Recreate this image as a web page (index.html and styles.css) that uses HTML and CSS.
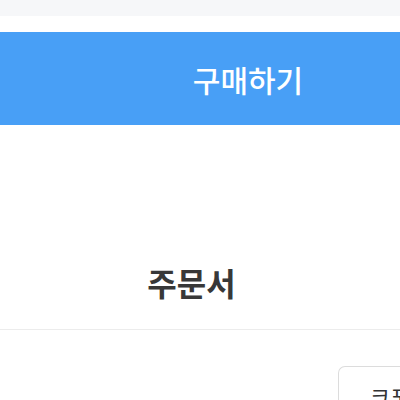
FILE: index.html
```html
<!DOCTYPE html>
<html lang="ko">
<head>
  <meta charset="UTF-8" />
  <meta name="viewport" content="width=device-width, initial-scale=1.0"/>
  <title>주문서</title>
  <link rel="stylesheet" href="styles.css">
</head>
<body>
  <div class="top-strip"></div>
  <div class="buy-wrap">
    <button class="buy-btn">구매하기</button>
  </div>
  <section class="order-head">
    <h1>주문서</h1>
  </section>
  <div class="order-body">
    <button class="coupon-btn">쿠폰</button>
  </div>
</body>
</html>
```

FILE: styles.css
```css
* { box-sizing: border-box; margin: 0; padding: 0; }
body {
  background: #fff;
  font-family: "Noto Sans CJK KR", "Noto Sans", sans-serif;
  width: 400px;
  height: 400px;
  overflow: hidden;
}
.top-strip {
  height: 16px;
  background: #f6f7f9;
}
.buy-wrap {
  padding-top: 16px;
}
.buy-btn {
  display: flex;
  align-items: center;
  justify-content: center;
  width: 100%;
  height: 93px;
  padding-left: 96px;
  border: none;
  background: #489ff6;
  color: #fff;
  font-family: inherit;
  font-size: 30px;
  font-weight: 500;
}
.order-head {
  display: flex;
  justify-content: center;
  padding: 134px 17px 0 0;
  height: 205px;
  border-bottom: 1px solid #ececec;
}
.order-head h1 {
  font-size: 32px;
  font-weight: 700;
  color: #383838;
  line-height: 46px;
}
.order-body {
  display: flex;
  justify-content: flex-end;
  padding-top: 36px;
}
.coupon-btn {
  width: 64px;
  height: 48px;
  margin-right: -2px;
  padding: 14px 0 0 31px;
  border: 1px solid #dcdcdc;
  border-right: none;
  border-radius: 7px 0 0 7px;
  background: #fff;
  color: #333;
  font-family: inherit;
  font-size: 22px;
  text-align: left;
  white-space: nowrap;
  overflow: hidden;
}
```
